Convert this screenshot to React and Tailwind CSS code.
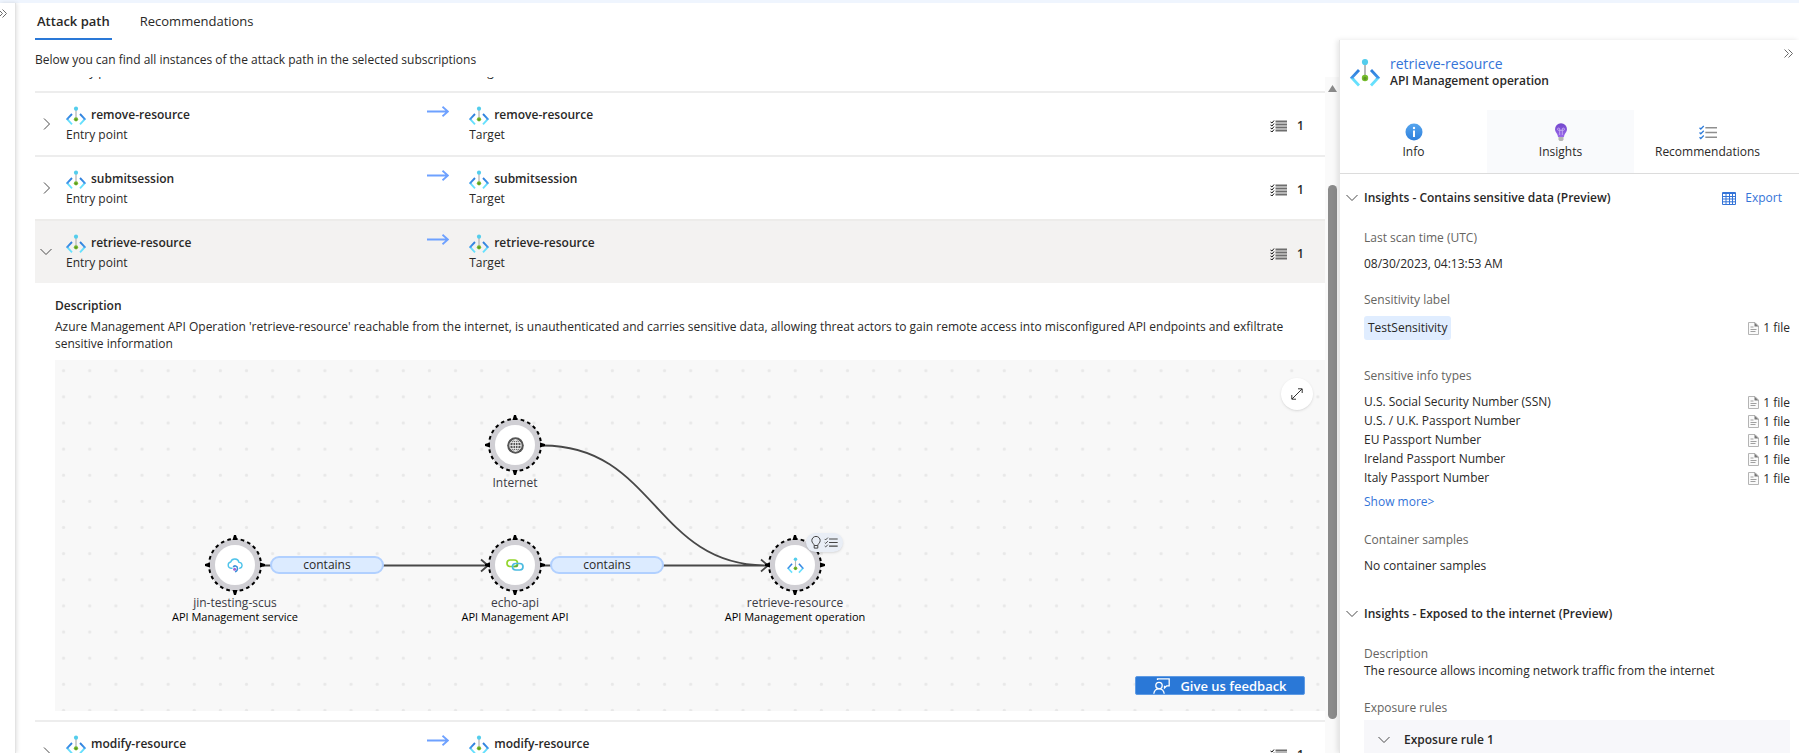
import { useId } from "react";

const TEXT = "font-['Open_Sans','Noto_Sans',sans-serif] text-[12px] leading-4 text-[#292827]";

function ApiOperationIcon({ className }) {
  const id = useId();
  return (
    <svg viewBox="0 0 30 30" className={className} fill="none" aria-hidden="true">
      <defs>
        <linearGradient id={id} x1="0" y1="11" x2="0" y2="29" gradientUnits="userSpaceOnUse">
          <stop offset="0.1" stopColor="#2f7fdc" />
          <stop offset="0.5" stopColor="#3f96ea" />
          <stop offset="0.55" stopColor="#66dcfb" />
          <stop offset="1" stopColor="#66e4ff" />
        </linearGradient>
      </defs>
      <path d="M9 12 1.800 19.800 9 27.500M21 12l7.200 7.800-7.200 7.700" stroke={`url(#${id})`} strokeWidth="2.800" />
      <path d="M15 6v12" stroke="#b9b9b9" strokeWidth="2" />
      <circle cx="15" cy="4" r="3.100" fill="#53cdec" />
      <circle cx="15" cy="20" r="3.200" fill="#76bc2d" />
      <circle cx="15" cy="20.500" r="1.700" fill="#5e9624" />
    </svg>
  );
}

function Chevron({ down }) {
  return (
    <svg viewBox="0 0 12 12" className="h-3 w-3 shrink-0" fill="none" stroke="#4a4a4a" aria-hidden="true">
      <path d={down ? "m.5 3 5.500 5.500L11.500 3" : "m4 .5 5.500 5.500L4 11.500"} />
    </svg>
  );
}

function DoubleChevron() {
  return (
    <svg viewBox="0 0 9 9" className="h-[9px] w-[9px]" fill="none" stroke="#6a6a6a" aria-hidden="true">
      <path d="m.5.5 4 4-4 4M4.500.5l4 4-4 4" />
    </svg>
  );
}

function ChecklistIcon({ className, check = "#111", line = "#666", width = 2 }) {
  return (
    <svg viewBox="0 0 17 14" className={className} fill="none" aria-hidden="true">
      <path d="m.5 2.500 1.200 1.200L4.500.8M.5 7l1.200 1.200 2.800-2.900M.5 11.500l1.200 1.200 2.800-2.900" stroke={check} strokeWidth="1.200" />
      <path d="M6 2.500h11M6 7h11M6 11.500h11" stroke={line} strokeWidth={width} />
    </svg>
  );
}

function TaskIcon() {
  return (
    <svg viewBox="0 0 17 12" className="h-3 w-[17px]" fill="none" aria-hidden="true">
      <path d="M.5 2 2 3 4 .5M.5 5 2 6l2-2.500M.5 8 2 9l2-2.500M.5 11l1.500 1 2-2.500" stroke="#111" />
      <path d="M5.500 1.500H17M5.500 4.500H17M5.500 7.500H17M5.500 10.500H17" stroke="#6e6e6e" strokeWidth="2" />
    </svg>
  );
}

function FileIcon() {
  return (
    <svg viewBox="0 0 11 13" className="h-[13px] w-[11px]" fill="none" aria-hidden="true">
      <path d="M.5.5h6.500l3.500 3.500v8.500H.5z" fill="#fafafa" stroke="#b4b4b4" />
      <path d="M6.500.5v4h4z" fill="#777" />
      <path d="M2.500 5h3M2.500 7.500h6M2.500 9.500h5" stroke="#a0a0a0" />
    </svg>
  );
}

const attackPaths = [
  { name: "remove-resource" },
  { name: "submitsession" },
  { name: "retrieve-resource", open: true },
  { name: "modify-resource" },
];

function Endpoint({ name, role }) {
  return (
    <div className="pt-[13px]">
      <div className="flex h-5 items-center gap-[5px]">
        <ApiOperationIcon className="h-5 w-5 shrink-0" />
        <span className="pb-[3px] font-semibold">{name}</span>
      </div>
      <div className="pt-px">{role}</div>
    </div>
  );
}

function ScrolledOutRow() {
  return (
    <div className="grid h-[14px] grid-cols-[31px_28%_42px_1fr_55px] overflow-hidden">
      <span className="col-start-2 -mt-[13px]">Entry point</span>
      <span className="col-start-4 -mt-[13px]">Target</span>
    </div>
  );
}

function PathRow({ name, open }) {
  return (
    <div
      className={`grid h-16 grid-cols-[31px_28%_42px_1fr_55px] border-t-2 ${
        open ? "border-[#edecea] bg-[#f3f2f1]" : "border-[#ededed]"
      }`}
    >
      <button type="button" aria-expanded={!!open} aria-label={`Toggle ${name}`} className="flex w-[22px] items-center justify-center">
        <Chevron down={open} />
      </button>
      <Endpoint name={name} role="Entry point" />
      <div className="pt-[13px]">
        <svg viewBox="0 0 22 11" className="h-[11px] w-[22px]" fill="none" stroke="#6ea1ff" strokeWidth="1.800" aria-hidden="true">
          <path d="M0 5.500h21M15.500.8 21 5.500l-5.500 4.700" />
        </svg>
      </div>
      <Endpoint name={name} role="Target" />
      <div className="flex items-center gap-[10px] pt-1">
        <TaskIcon />
        <span className="font-semibold">1</span>
      </div>
    </div>
  );
}

function CloudIcon() {
  return (
    <svg viewBox="0 0 16 15" className="h-[15px] w-4" fill="none" aria-hidden="true">
      <path d="M5.500 10.300H4a3.200 3.200 0 0 1-.3-6.300A4.300 4.300 0 0 1 12 4.400a3 3 0 0 1 .8 5.900h-.6" stroke="#4fc3ea" strokeWidth="1.400" />
      <path d="M6.300 9.200c.6-2 4.200-1.800 4.200 1.300 0 2-1.200 3-2.500 3.400" stroke="#3b8fd8" strokeWidth="1.500" />
      <circle cx="7.600" cy="11.300" r="1.500" fill="#a45fd0" />
    </svg>
  );
}

function LinkedIcon() {
  return (
    <svg viewBox="0 0 18 12" className="h-3 w-[18px]" fill="none" strokeWidth="1.700" aria-hidden="true">
      <rect x="1" y="1" width="10.500" height="6.500" rx="3.200" stroke="#93d52d" />
      <rect x="6.500" y="4.500" width="10.500" height="6.500" rx="3.200" stroke="#4bbbe0" />
      <path d="M8 7.500h1.500a2 2 0 0 0 2-2" stroke="#5cae3a" />
    </svg>
  );
}

function GlobeIcon() {
  return (
    <svg viewBox="0 0 17 17" className="h-[17px] w-[17px]" fill="none" aria-hidden="true">
      <circle cx="8.500" cy="8.500" r="8.300" fill="#555" />
      <g stroke="#f4f4f4" strokeWidth="1">
        <circle cx="8.500" cy="8.500" r="5.700" />
        <ellipse cx="8.500" cy="8.500" rx="2.600" ry="5.700" />
        <path d="M8.500 2.800v11.400M2.800 8.500h11.400M3.800 5.500h9.400M3.800 11.500h9.400" strokeWidth="0.800" />
      </g>
    </svg>
  );
}

function GraphNode({ place, icon, name, type }) {
  return (
    <div className={`absolute flex w-[180px] -translate-x-1/2 flex-col items-center ${place}`}>
      <div className="relative flex h-15 w-15 items-center justify-center">
        <svg viewBox="0 0 60 60" className="absolute inset-0 h-full w-full" fill="none" aria-hidden="true">
          <circle cx="30" cy="30" r="23" fill="#fff" stroke="#d0cfd4" strokeWidth="6" />
          <circle cx="30" cy="30" r="26" stroke="#000" strokeWidth="2" strokeDasharray="3.600 3.207" strokeDashoffset="1.800" />
          <path d="M29 0h2l1.500 5h-5zM29 60h2l1.500-5h-5zM0 29v2l5 1.500v-5zM60 29v2l-5 1.500v-5z" fill="#000" />
        </svg>
        <span className="relative">{icon}</span>
      </div>
      <div className="text-[#3b3a45]">{name}</div>
      {type && <div className="-mt-px text-[11px] leading-[14px] text-black">{type}</div>}
    </div>
  );
}

function EdgeLabel({ place }) {
  return (
    <div className={`absolute flex h-[18px] w-[114px] items-center justify-center rounded-full border-2 border-[#b1d0ff] bg-[#dcebff] ${place}`}>
      contains
    </div>
  );
}

function PathGraph() {
  return (
    <div className="relative mt-2 h-[351px] overflow-hidden bg-[#f8f8f8]">
      <svg className="absolute inset-0 h-full w-full" fill="none" aria-hidden="true">
        <defs>
          <pattern id="dots" width="26.130" height="26.130" x="-4.400" y="-2.300" patternUnits="userSpaceOnUse">
            <circle cx="13" cy="13" r="1.600" fill="#e8e8e8" />
          </pattern>
        </defs>
        <rect width="100%" height="100%" fill="url(#dots)" />
        <g stroke="#484848" strokeWidth="1.800">
          <path d="M208 205.500h223M488 205.500h223M488 85.500C600 85.500 600 205.500 711 205.500" />
          <path d="m426 199.500 7 6-7 6M706 199.500l7 6-7 6" />
        </g>
      </svg>
      <GraphNode place="left-[460px] top-[55px]" icon={<GlobeIcon />} name="Internet" />
      <GraphNode place="left-[180px] top-[175px]" icon={<CloudIcon />} name="jin-testing-scus" type="API Management service" />
      <GraphNode place="left-[460px] top-[175px]" icon={<LinkedIcon />} name="echo-api" type="API Management API" />
      <GraphNode
        place="left-[740px] top-[175px]"
        icon={<ApiOperationIcon className="h-[17px] w-[17px]" />}
        name="retrieve-resource"
        type="API Management operation"
      />
      <EdgeLabel place="left-[215px] top-[196px]" />
      <EdgeLabel place="left-[495px] top-[196px]" />
      <div className="absolute left-[751px] top-[173px] flex h-[19px] w-[37px] items-center justify-center gap-[3px] rounded-full bg-[#e9eef6] shadow">
        <svg viewBox="0 0 10 13" className="h-[13px] w-[10px]" fill="none" stroke="#444" aria-hidden="true">
          <path d="M3.200 9.500C3.200 7.800.8 7 .8 4.600a4.200 4.200 0 0 1 8.400 0c0 2.400-2.400 3.200-2.400 4.900v2.600H3.200zM3.200 9.500h3.600" />
        </svg>
        <ChecklistIcon className="h-[11px] w-[14px]" check="#444" line="#444" width={1.5} />
      </div>
      <button type="button" aria-label="Expand graph" className="absolute right-3 top-[18px] flex h-8 w-8 items-center justify-center rounded-full bg-white shadow">
        <svg viewBox="0 0 12 12" className="h-3 w-3" fill="none" stroke="#333" aria-hidden="true">
          <path d="m1 11 10-10M7 .8h4.200V5M.8 7v4.200H5" />
        </svg>
      </button>
      <button
        type="button"
        className="absolute right-5 bottom-4 flex h-[19px] w-[170px] items-center justify-center gap-[10px] rounded-[2px] border border-[#5f9be4] bg-[#2a78d7] font-semibold text-white"
      >
        <svg viewBox="0 0 17 16" className="h-4 w-[17px]" fill="none" stroke="#fff" strokeWidth="1.300" aria-hidden="true">
          <circle cx="6" cy="7.500" r="3.200" />
          <path d="M.8 15.800c.3-3 2.200-5 5.200-5s4.900 2 5.200 5M4.500 2V.8h11.700v7h-2.400L11.500 10V7.800" />
        </svg>
        <span className="text-[13px]">Give us feedback</span>
      </button>
    </div>
  );
}

function MainPane() {
  return (
    <main className="flex min-w-0 flex-1 flex-col">
      <nav className="flex gap-6 pl-[19px] text-[13px]">
        <button type="button" className="h-[37px] border-b-2 border-[#2a78d7] px-[2px] pt-px font-semibold">
          Attack path
        </button>
        <button type="button" className="h-[37px] border-b-2 border-transparent px-1 pt-px">
          Recommendations
        </button>
      </nav>
      <p className="pt-3 pb-[9px] pl-[19px]">Below you can find all instances of the attack path in the selected subscriptions</p>
      <div className="flex min-h-0 flex-1 pl-[19px]">
        <div className="min-w-0 flex-1 overflow-hidden">
          <ScrolledOutRow />
          <ul>
            {attackPaths.map((path) => (
              <li key={path.name}>
                <PathRow {...path} />
                {path.open && (
                  <section className="pt-[15px] pb-[9px] pl-5">
                    <h2 className="font-semibold">Description</h2>
                    <p className="pt-1 pr-2 leading-[17px]">
                      Azure Management API Operation 'retrieve-resource' reachable from the internet, is unauthenticated and carries
                      sensitive data, allowing threat actors to gain remote access into misconfigured API endpoints and exfiltrate
                      sensitive information
                    </p>
                    <PathGraph />
                  </section>
                )}
              </li>
            ))}
          </ul>
        </div>
        <div className="flex w-[14px] shrink-0 flex-col items-center bg-[#fafafa] pt-2" aria-hidden="true">
          <svg viewBox="0 0 9 7" className="h-[7px] w-[9px]" fill="#8a8a8a">
            <path d="M4.500 0 9 7H0z" />
          </svg>
          <div className="mt-[93px] h-[534px] w-[9px] rounded-full bg-[#8b8b8b]" />
        </div>
      </div>
    </main>
  );
}

function InfoIcon() {
  return (
    <svg viewBox="0 0 18 18" className="h-[18px] w-[18px]" aria-hidden="true">
      <defs>
        <linearGradient id="info" x1="0" y1="0" x2="0" y2="1">
          <stop stopColor="#56a5ee" />
          <stop offset="1" stopColor="#2f80dc" />
        </linearGradient>
      </defs>
      <circle cx="9" cy="9" r="8.500" fill="url(#info)" />
      <path d="M8 7.500h2V14H8z" fill="#fff" />
      <circle cx="9" cy="5" r="1.200" fill="#fff" />
    </svg>
  );
}

function BulbIcon() {
  return (
    <svg viewBox="0 0 14 18" className="h-[18px] w-[14px]" fill="none" aria-hidden="true">
      <defs>
        <linearGradient id="bulb" x1="0" y1="0" x2="0" y2="1">
          <stop stopColor="#7347cc" />
          <stop offset="1" stopColor="#9a68ea" />
        </linearGradient>
      </defs>
      <path d="M7 .3a6 6 0 0 1 6 6c0 3-3 4.700-3 7.700H4C4 11 1 9.300 1 6.300a6 6 0 0 1 6-6z" fill="url(#bulb)" />
      <path
        d="M5.700 12V7.300M8.300 12V7.300M5.700 7.300H4.500a1.100 1.100 0 1 1 1.200-1.200zM8.300 7.300h1.200a1.100 1.100 0 1 0-1.200-1.200zM5.700 7.300h2.600"
        stroke="#d9c6f8"
        strokeWidth="0.700"
      />
      <path d="M4.500 14h5v2.500L8.500 18h-3l-1-1.500z" fill="#b5b5b5" />
    </svg>
  );
}

function DetailTab({ icon, label, active }) {
  return (
    <button type="button" className={`flex h-[63px] w-[147px] flex-col items-center gap-[3px] pt-[13px] ${active ? "bg-[#f9fafc]" : ""}`}>
      <span className="flex h-[18px] items-center">{icon}</span>
      <span>{label}</span>
    </button>
  );
}

function SectionHeader({ children, action }) {
  return (
    <div className="flex items-center pl-[6px]">
      <button type="button" aria-expanded="true" className="flex items-center gap-[6px] font-semibold">
        <Chevron down />
        {children}
      </button>
      {action}
    </div>
  );
}

function FileCount() {
  return (
    <span className="flex items-center gap-1">
      <FileIcon />1 file
    </span>
  );
}

const infoTypes = [
  "U.S. Social Security Number (SSN)",
  "U.S. / U.K. Passport Number",
  "EU Passport Number",
  "Ireland Passport Number",
  "Italy Passport Number",
];

const LABEL = "text-[#65645f]";

function DetailsPane() {
  return (
    <aside className="mt-[37px] w-[460px] shrink-0 overflow-hidden border-l border-[#e6e6e6] bg-white shadow-[-2px_0_5px_rgba(0,0,0,0.1)]">
      <header className="flex items-start pt-[14px] pr-[6px] pl-[9px]">
        <ApiOperationIcon className="mt-1 h-[30px] w-[32px]" />
        <div className="flex-1 pl-[9px]">
          <a href="#resource" className="block text-[14px] leading-5 text-[#3474d8]">
            retrieve-resource
          </a>
          <div className="font-semibold leading-[14px]">API Management operation</div>
        </div>
        <button type="button" aria-label="Collapse details" className="-mt-[5px]">
          <DoubleChevron />
        </button>
      </header>
      <div className="mt-[22px] flex border-b border-[#dcdcdc]">
        <DetailTab icon={<InfoIcon />} label="Info" />
        <DetailTab icon={<BulbIcon />} label="Insights" active />
        <DetailTab icon={<ChecklistIcon className="h-[15px] w-[18px]" check="#2f7ddb" line="#8f8f8f" width={1.5} />} label="Recommendations" />
      </div>

      <section className="pt-4">
        <SectionHeader
          action={
            <button type="button" className="mr-[17px] ml-auto flex items-center gap-[9px] text-[#3474d8]">
              <svg viewBox="0 0 14 13" className="h-[13px] w-[14px]" fill="none" stroke="#3474d8" aria-hidden="true">
                <path d="M.5.5h13v12H.5zM.5 1.500h13M.5 4.500h13M.5 7h13M.5 9.800h13M4 2v10.500M7.500 2v10.500M10.500 2v10.500" />
              </svg>
              Export
            </button>
          }
        >
          Insights - Contains sensitive data (Preview)
        </SectionHeader>
        <div className="pr-[9px] pl-6">
          <div className={`mt-6 ${LABEL}`}>Last scan time (UTC)</div>
          <div className="mt-[10px]">08/30/2023, 04:13:53 AM</div>
          <div className={`mt-5 ${LABEL}`}>Sensitivity label</div>
          <div className="mt-2 flex items-center justify-between">
            <span className="rounded-[3px] bg-[#e0edff] p-1">TestSensitivity</span>
            <FileCount />
          </div>
          <div className={`mt-7 ${LABEL}`}>Sensitive info types</div>
          <ul className="mt-2">
            {infoTypes.map((type) => (
              <li key={type} className="flex h-[19px] items-start justify-between leading-[19px]">
                {type}
                <span className="pt-px">
                  <FileCount />
                </span>
              </li>
            ))}
          </ul>
          <button type="button" className="mt-[7px] block text-[#3474d8]">
            Show more&gt;
          </button>
          <div className={`mt-[22px] ${LABEL}`}>Container samples</div>
          <div className="mt-[10px]">No container samples</div>
        </div>
      </section>

      <section className="pt-8">
        <SectionHeader>Insights - Exposed to the internet (Preview)</SectionHeader>
        <div className="pr-[9px] pl-6">
          <div className={`mt-6 ${LABEL}`}>Description</div>
          <div className="leading-[18px]">The resource allows incoming network traffic from the internet</div>
          <div className={`mt-5 ${LABEL}`}>Exposure rules</div>
          <button type="button" className="mt-1 flex h-[39px] w-full items-center gap-[14px] bg-[#f7f7fa] pl-[14px] font-semibold">
            <Chevron down />
            Exposure rule 1
          </button>
        </div>
      </section>
    </aside>
  );
}

export default function App() {
  return (
    <div className={`flex h-screen flex-col overflow-hidden bg-white ${TEXT}`}>
      <div className="h-[3px] shrink-0 bg-[#eff5fe]" />
      <div className="flex min-h-0 flex-1">
        <div className="w-4 shrink-0 border-r border-[#e3e3e3] pt-[6px] shadow-[1px_0_4px_rgba(0,0,0,0.12)]">
          <button type="button" aria-label="Expand menu" className="-ml-[2px] block">
            <DoubleChevron />
          </button>
        </div>
        <MainPane />
        <DetailsPane />
      </div>
    </div>
  );
}
